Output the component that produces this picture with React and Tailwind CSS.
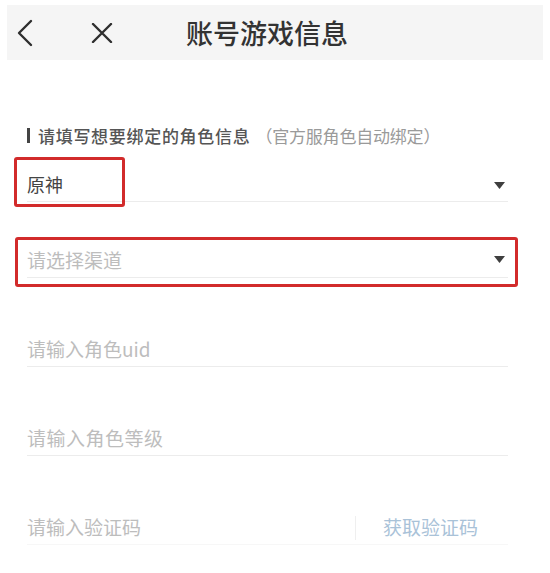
import React from "react";

function Caret() {
  return (
    <svg width="11" height="7" viewBox="0 0 11 7" className="shrink-0">
      <path d="M0 0 L11 0 L5.5 7 Z" fill="#3f3f3f" />
    </svg>
  );
}

export default function App() {
  return (
    <div className="w-[550px] h-[573px] bg-white overflow-hidden font-['Noto_Sans_CJK_SC',sans-serif]">
      {/* header */}
      <div className="mt-[5px] mx-[7px] h-[55px] bg-[#f5f5f5] flex items-center">
        <svg width="18" height="28" viewBox="0 0 18 28" className="ml-[9px]">
          <path d="M15 2 L3 14 L15 26" fill="none" stroke="#2e2e2e" strokeWidth="2.4" strokeLinecap="round" strokeLinejoin="round" />
        </svg>
        <svg width="22" height="20" viewBox="0 0 22 20" className="ml-[57px]">
          <path d="M2 1 L20 19 M20 1 L2 19" fill="none" stroke="#2e2e2e" strokeWidth="2.4" strokeLinecap="round" />
        </svg>
        <div className="ml-[73px] text-[27px] leading-none font-medium text-[#333]">账号游戏信息</div>
      </div>

      {/* section label */}
      <div className="mt-[65px] ml-[27px] h-[20px] flex items-center">
        <div className="w-[3px] h-[15px] bg-[#444]"></div>
        <span className="ml-[8px] text-[17px] leading-none font-medium text-[#555] tracking-[0.7px]">请填写想要绑定的角色信息</span>
        <span className="ml-[5px] text-[17px] leading-none text-[#9a9a9a] tracking-[-0.2px]">（官方服角色自动绑定）</span>
      </div>

      {/* game */}
      <div className="relative mt-[23px] ml-[27px] w-[481px] h-[34px] flex items-center justify-between border-b border-[#ececec]">
        <span className="text-[18px] text-[#444]">原神</span>
        <span className="mr-[3px] mt-[1px]"><Caret /></span>
        <div className="absolute left-[-13px] top-[-11px] w-[111px] h-[50px] border-[3px] border-[#d22b2b] rounded-[3px]"></div>
      </div>

      {/* channel */}
      <div className="relative mt-[42px] ml-[27px] w-[481px] h-[34px] flex items-center justify-between border-b border-[#ececec]">
        <span className="text-[19px] text-[#bdbdbd]">请选择渠道</span>
        <span className="mr-[3px] mb-[3px]"><Caret /></span>
        <div className="absolute left-[-12px] top-[-7px] w-[503px] h-[50px] border-[3px] border-[#d22b2b] rounded-[3px]"></div>
      </div>

      {/* uid */}
      <div className="mt-[55px] ml-[27px] w-[481px] h-[34px] flex items-center border-b border-[#ececec]">
        <span className="text-[19px] text-[#bdbdbd]">请输入角色uid</span>
      </div>

      {/* level */}
      <div className="mt-[55px] ml-[27px] w-[481px] h-[34px] flex items-center border-b border-[#ececec]">
        <span className="text-[19px] text-[#bdbdbd] tracking-[0.5px]">请输入角色等级</span>
      </div>

      {/* code */}
      <div className="mt-[55px] ml-[27px] w-[481px] h-[34px] flex items-center border-b border-[#f7f7f7]">
        <span className="flex-1 text-[19px] text-[#bdbdbd]">请输入验证码</span>
        <div className="w-px h-[24px] bg-[#efefef]"></div>
        <span className="ml-[27px] mr-[30px] text-[19px] text-[#a9c2d8]">获取验证码</span>
      </div>
    </div>
  );
}
